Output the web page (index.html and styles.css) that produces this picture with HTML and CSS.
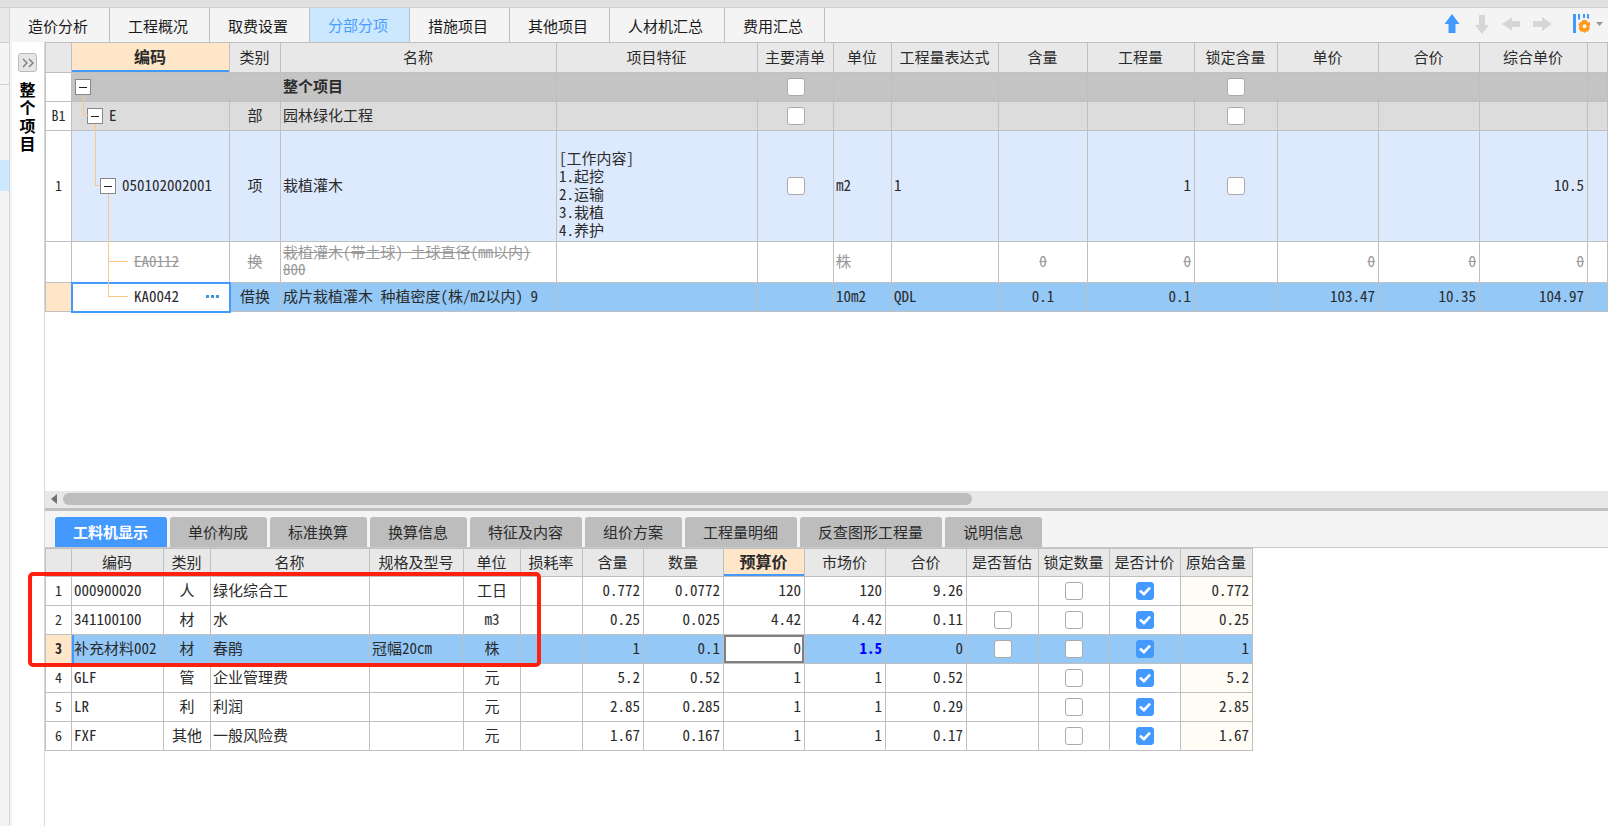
FILE: index.html
```
<!DOCTYPE html>
<html lang="zh-CN">
<head>
<meta charset="utf-8">
<title>分部分项</title>
<link rel="stylesheet" href="styles.css">
</head>
<body>
<div class="topbar"></div>
<div class="app">
  <aside class="rail">
    <div class="rail-head"></div>
    <div class="rail-tool"></div>
    <div class="rail-list"><div class="rail-active"></div></div>
  </aside>
  <div class="workspace">
    <header class="tabbar">
      <nav class="tabs">
        <button class="tab">造价分析</button>
        <button class="tab">工程概况</button>
        <button class="tab">取费设置</button>
        <button class="tab tab-on">分部分项</button>
        <button class="tab">措施项目</button>
        <button class="tab">其他项目</button>
        <button class="tab">人材机汇总</button>
        <button class="tab">费用汇总</button>
      </nav>
      <div class="tools">
        <button class="tool" aria-label="上移"><svg width="20" height="20" viewBox="0 0 20 20"><path fill="#4499ff" d="M10 0l7.500 10H13.500v9h-7v-9H2.500z"/></svg></button>
        <button class="tool" aria-label="下移"><svg width="20" height="20" viewBox="0 0 20 20"><path fill="#d6d6d6" d="M10 20L3 11h4V1h6v10h4z"/></svg></button>
        <button class="tool" aria-label="左移"><svg width="20" height="20" viewBox="0 0 20 20"><path fill="#d6d6d6" d="M0 10l10-7v4h8v6h-8v4z"/></svg></button>
        <button class="tool" aria-label="右移"><svg width="20" height="20" viewBox="0 0 20 20"><path fill="#d6d6d6" d="M20 10L10 3v4H1v6h9v4z"/></svg></button>
        <button class="tool tool-set" aria-label="列设置"><svg width="32" height="20" viewBox="0 0 32 20"><path fill="#4499ff" d="M1 0h3v19H1zM6 0h2v6L6 5zM11 0h2v4h-2zM15 0h2v5l-2-1z"/><path fill="#ff9a1f" fill-rule="evenodd" d="M10.500 6h4l1 2 2.500.5v3L17 12.500l1 1.500-2 3.500h-2L12.500 19l-2-1.500h-2l-2-3.500 1-1.500-1-1.500 1.500-3 2-.2zM12.500 10.200a2 2 0 1 0 .01 4 2 2 0 1 0-.01-4z"/><path fill="#999" d="M24 8h7l-3.500 4z"/></svg></button>
      </div>
    </header>
    <div class="body">
      <aside class="side">
        <button class="expand" aria-label="展开"><svg width="12" height="10" viewBox="0 0 12 10"><path d="M1 1l4 4-4 4M7 1l4 4-4 4" fill="none" stroke="#777" stroke-width="1.300"/></svg></button>
        <div class="side-title">整个项目</div>
      </aside>
      <main class="main">
        <section class="upper">
          <table class="grid grid-upper">
            <colgroup><col class="w26"><col class="w158"><col class="w51"><col class="w276"><col class="w201"><col class="w76"><col class="w58"><col class="w107"><col class="w89"><col class="w107"><col class="w83"><col class="w101"><col class="w101"><col class="w108"><col></colgroup>
            <thead><tr><th></th><th class="picked">编码</th><th>类别</th><th>名称</th><th>项目特征</th><th>主要清单</th><th>单位</th><th>工程量表达式</th><th>含量</th><th>工程量</th><th>锁定含量</th><th>单价</th><th>合价</th><th>综合单价</th><th></th></tr></thead>
            <tbody>
              <tr class="r-total"><td class="no"></td><td class="tree"><div class="node l0"><button class="toggle" aria-label="折叠"></button></div><i class="down l0"></i></td><td></td><td class="b">整个项目</td><td></td><td class="k"><input type="checkbox" aria-label="主要清单"></td><td></td><td></td><td></td><td></td><td class="k"><input type="checkbox" aria-label="锁定含量"></td><td></td><td></td><td></td><td></td></tr>
              <tr class="r-part"><td class="no">B1</td><td class="tree"><i class="up l0"></i><i class="down l1"></i><div class="node l1"><button class="toggle" aria-label="折叠"></button><span class="label">E</span></div></td><td class="c">部</td><td>园林绿化工程</td><td></td><td class="k"><input type="checkbox" aria-label="主要清单"></td><td></td><td></td><td></td><td></td><td class="k"><input type="checkbox" aria-label="锁定含量"></td><td></td><td></td><td></td><td></td></tr>
              <tr class="r-item"><td class="no">1</td><td class="tree"><i class="up l1"></i><i class="down l2"></i><div class="node l2"><button class="toggle" aria-label="折叠"></button><span class="label">050102002001</span></div></td><td class="c">项</td><td>栽植灌木</td><td class="feature"><br>[工作内容]<br>1.起挖<br>2.运输<br>3.栽植<br>4.养护</td><td class="k"><input type="checkbox" aria-label="主要清单"></td><td>m2</td><td>1</td><td></td><td class="r">1</td><td class="k"><input type="checkbox" aria-label="锁定含量"></td><td></td><td></td><td class="r">10.5</td><td></td></tr>
              <tr class="r-old"><td class="no"></td><td class="tree"><i class="up stub l2"></i><i class="down full l2"></i><div class="node l3"><s class="label">EA0112</s></div></td><td class="c"><s>换</s></td><td><s>栽植灌木(带土球) 土球直径(mm以内) 800</s></td><td></td><td></td><td><s>株</s></td><td></td><td class="c"><s>0</s></td><td class="r"><s>0</s></td><td></td><td class="r"><s>0</s></td><td class="r"><s>0</s></td><td class="r"><s>0</s></td><td></td></tr>
              <tr class="r-sel"><td class="no picked-no"></td><td class="tree editing"><i class="up stub l2"></i><div class="node l3"><input class="code label" type="text" value="KA0042" aria-label="编码"><button class="more" aria-label="更多"><svg width="14" height="4" viewBox="0 0 14 4"><path fill="#3d95e6" d="M0 0h3v3H0zM5 0h3v3H5zM10 0h3v3h-3z"/></svg></button></div></td><td class="c">借换</td><td>成片栽植灌木 种植密度(株/m2以内) 9</td><td></td><td></td><td>10m2</td><td>QDL</td><td class="c">0.1</td><td class="r">0.1</td><td></td><td class="r">103.47</td><td class="r">10.35</td><td class="r">104.97</td><td></td></tr>
            </tbody>
          </table>
        </section>
        <div class="scroll"><svg width="6" height="10" viewBox="0 0 6 10"><path fill="#707070" d="M6 0v10L0 5z"/></svg><div class="thumb"></div></div>
        <section class="lower">
          <nav class="subtabs">
            <button class="subtab subtab-on">工料机显示</button>
            <button class="subtab">单价构成</button>
            <button class="subtab">标准换算</button>
            <button class="subtab">换算信息</button>
            <button class="subtab">特征及内容</button>
            <button class="subtab">组价方案</button>
            <button class="subtab">工程量明细</button>
            <button class="subtab">反查图形工程量</button>
            <button class="subtab">说明信息</button>
          </nav>
          <div class="detail">
            <table class="grid grid-lower">
              <colgroup><col class="w26"><col class="w92"><col class="w47"><col class="w159"><col class="w94"><col class="w57"><col class="w62"><col class="w61"><col class="w80"><col class="w81"><col class="w81"><col class="w81"><col class="w72"><col class="w71"><col class="w71"><col class="w72"></colgroup>
              <thead><tr><th></th><th>编码</th><th>类别</th><th>名称</th><th>规格及型号</th><th>单位</th><th>损耗率</th><th>含量</th><th>数量</th><th class="picked">预算价</th><th>市场价</th><th>合价</th><th>是否暂估</th><th>锁定数量</th><th>是否计价</th><th>原始含量</th></tr></thead>
              <tbody>
                <tr><td class="no">1</td><td>000900020</td><td class="c">人</td><td>绿化综合工</td><td></td><td class="c">工日</td><td></td><td class="r">0.772</td><td class="r">0.0772</td><td class="r">120</td><td class="r">120</td><td class="r">9.26</td><td></td><td class="k"><input type="checkbox" aria-label="锁定数量"></td><td class="k"><input type="checkbox" checked aria-label="是否计价"></td><td class="r orig">0.772</td></tr>
                <tr><td class="no">2</td><td>341100100</td><td class="c">材</td><td>水</td><td></td><td class="c">m3</td><td></td><td class="r">0.25</td><td class="r">0.025</td><td class="r">4.42</td><td class="r">4.42</td><td class="r">0.11</td><td class="k"><input type="checkbox" aria-label="是否暂估"></td><td class="k"><input type="checkbox" aria-label="锁定数量"></td><td class="k"><input type="checkbox" checked aria-label="是否计价"></td><td class="r orig">0.25</td></tr>
                <tr class="r-sel"><td class="no picked-no b">3</td><td class="cursor">补充材料002</td><td class="c">材</td><td>春鹃</td><td>冠幅20cm</td><td class="c">株</td><td></td><td class="r">1</td><td class="r">0.1</td><td class="edit"><input class="price" type="text" value="0" aria-label="预算价"></td><td class="r changed">1.5</td><td class="r">0</td><td class="k"><input type="checkbox" aria-label="是否暂估"></td><td class="k"><input type="checkbox" aria-label="锁定数量"></td><td class="k"><input type="checkbox" checked aria-label="是否计价"></td><td class="r">1</td></tr>
                <tr><td class="no">4</td><td>GLF</td><td class="c">管</td><td>企业管理费</td><td></td><td class="c">元</td><td></td><td class="r">5.2</td><td class="r">0.52</td><td class="r">1</td><td class="r">1</td><td class="r">0.52</td><td></td><td class="k"><input type="checkbox" aria-label="锁定数量"></td><td class="k"><input type="checkbox" checked aria-label="是否计价"></td><td class="r orig">5.2</td></tr>
                <tr><td class="no">5</td><td>LR</td><td class="c">利</td><td>利润</td><td></td><td class="c">元</td><td></td><td class="r">2.85</td><td class="r">0.285</td><td class="r">1</td><td class="r">1</td><td class="r">0.29</td><td></td><td class="k"><input type="checkbox" aria-label="锁定数量"></td><td class="k"><input type="checkbox" checked aria-label="是否计价"></td><td class="r orig">2.85</td></tr>
                <tr><td class="no">6</td><td>FXF</td><td class="c">其他</td><td>一般风险费</td><td></td><td class="c">元</td><td></td><td class="r">1.67</td><td class="r">0.167</td><td class="r">1</td><td class="r">1</td><td class="r">0.17</td><td></td><td class="k"><input type="checkbox" aria-label="锁定数量"></td><td class="k"><input type="checkbox" checked aria-label="是否计价"></td><td class="r orig">1.67</td></tr>
              </tbody>
            </table>
            <div class="marker"></div>
          </div>
        </section>
      </main>
    </div>
  </div>
</div>
</body>
</html>
```
FILE: styles.css
```
* { box-sizing: border-box; }

body {
  margin: 0;
  height: 100vh;
  display: flex;
  flex-direction: column;
  overflow: hidden;
  background: #fff;
  color: #2b2b2b;
  font: 15px/17px "Noto Sans Mono CJK SC", "Noto Sans CJK SC", "Liberation Mono", sans-serif;
}

button, input { font: inherit; color: inherit; margin: 0; padding: 0; }
button { border: 0; background: none; }

.topbar { flex: none; height: 8px; background: #e0e0e0; border-bottom: 1px solid #cfcfcf; }
.app { flex: 1; display: flex; min-height: 0; }

/* left rail */
.rail { flex: none; width: 10px; background: #f4f4f4; border-right: 1px solid #d6d6d6; display: flex; flex-direction: column; }
.rail-head { height: 35px; background: #e8e8e8; border-bottom: 1px solid #cfcfcf; }
.rail-tool { height: 42px; border-bottom: 1px solid #d0d0d0; }
.rail-list { padding-top: 75px; }
.rail-active { height: 31px; background: #cce8ff; }

.workspace { flex: 1; min-width: 0; display: flex; flex-direction: column; }

/* page tabs */
.tabbar { flex: none; height: 34px; display: flex; justify-content: space-between; background: #f4f4f4; }
.tabs { display: flex; }
.tab {
  padding: 0 21px 0 18px;
  border-right: 1px solid #c0c0c0;
  font-family: "Noto Sans CJK SC", sans-serif;
  color: #1a1a1a;
}
.tab-on { background: #cce8ff; color: #4a9dff; padding-bottom: 2px; }
.tools { display: flex; gap: 10px; align-items: center; padding: 0 4px 2px 0; }
.tool { display: flex; }
.tool-set { margin-left: 10px; }

.body { flex: 1; display: flex; min-height: 0; }
.side {
  flex: none; width: 35px; border-right: 1px solid #d9d9d9; border-left: 2px solid #f4f4f4;
  display: flex; flex-direction: column; align-items: center; padding: 11px 1px 0 0; gap: 8px;
}
.expand {
  width: 19px; height: 19px; border: 1px solid #bbb; border-radius: 3px; background: #e6e6e6;
  display: flex; align-items: center; justify-content: center;
}
.side-title { width: 16px; font-size: 16px; line-height: 18px; font-weight: bold; color: #000; word-break: break-all; }

.main { flex: 1; min-width: 0; display: flex; flex-direction: column; }
.upper { flex: 1; min-height: 0; overflow: hidden; }

/* data grids */
.grid { table-layout: fixed; border-collapse: collapse; }
.grid-upper { width: 100%; }
.grid-lower { width: 1207px; }
.grid th, .grid td { border: 1px solid #c0c0c0; height: 29px; padding: 0 2px 4px; overflow: hidden; }
.grid th { background: #e8e8e8; font-weight: normal; padding: 0 1px 2px 0; white-space: nowrap; }
.grid-upper th { height: 30px; }
.grid-lower th { height: 28px; }
.grid th.picked { background: #ffe6c8; font-weight: bold; font-size: 16px; box-shadow: inset 0 -2px #4499ff; }
.grid td.no { background: #fff; text-align: center; padding: 0 0 2px; font-size: 14px; }
.grid td.picked-no { background: #ffe6c8; }
.grid td.c { text-align: center; }
.grid td.k { text-align: center; padding: 0; line-height: 1; }
.grid-upper td.k { padding-bottom: 1px; }
.grid td.r { text-align: right; padding-right: 3px; }
.grid td.b { font-weight: bold; }
.grid td.orig { background: #fffbf5; }
.grid td.changed { color: #00f; font-weight: bold; }

.w26 { width: 26px; } .w47 { width: 47px; } .w51 { width: 51px; } .w57 { width: 57px; }
.w58 { width: 58px; } .w61 { width: 61px; } .w62 { width: 62px; } .w71 { width: 71px; }
.w72 { width: 72px; } .w76 { width: 76px; } .w80 { width: 80px; } .w81 { width: 81px; }
.w83 { width: 83px; } .w89 { width: 89px; } .w92 { width: 92px; } .w94 { width: 94px; }
.w101 { width: 101px; } .w107 { width: 107px; } .w108 { width: 108px; } .w158 { width: 158px; }
.w159 { width: 159px; } .w201 { width: 201px; } .w276 { width: 276px; }

.r-total { background: #c4c4c4; }
.r-part { background: #dcdcdc; }
.r-item { background: #dde9fd; }
.r-sel { background: #93c8f7; }
.grid .r-item td { height: 111px; }
.grid .r-old td { height: 41px; }
.grid td.feature { line-height: 18px; padding-bottom: 2px; }
.r-old { color: #999; }

input[type="checkbox"] {
  appearance: none; display: inline-block; vertical-align: middle; position: relative;
  width: 18px; height: 18px; border: 1px solid #aaa; border-radius: 3px; background: #fff;
}
input[type="checkbox"]:checked { background: #4499ff; border-color: #4499ff; }
input[type="checkbox"]:checked::after {
  content: ""; position: absolute; inset: 3px 2px;
  background: #fff;
  clip-path: polygon(0 50%, 16% 32%, 40% 58%, 84% 4%, 100% 20%, 42% 96%);
}

/* tree column */
.grid td.tree { position: relative; padding: 0; overflow: visible; }
.l0 { --x: 3px; } .l1 { --x: 15px; } .l2 { --x: 28px; } .l3 { --x: 62px; }
.node { display: flex; align-items: center; gap: 6px; padding-left: var(--x); }
.label { padding-bottom: 4px; }
.toggle {
  flex: none; width: 16px; height: 16px; border: 1px solid #888; background: #fff;
  display: flex; align-items: center; justify-content: center;
}
.toggle::before { content: ""; width: 8px; height: 1px; background: #222; }
.up, .down { position: absolute; left: calc(var(--x) + 8px); border-left: 1px solid #fcc88a; }
.up { top: -1px; height: calc(50% + 1px); width: 5px; border-bottom: 1px solid #fcc88a; }
.stub { width: 20px; }
.down { top: calc(50% + 8px); bottom: 0; }
.full { top: 0; }
.grid td.editing { background: #fff; outline: 2px solid #4499ff; outline-offset: -1px; }
.code { flex: 1; min-width: 0; border: 0; background: none; outline: 0; }
.more { padding-right: 9px; display: flex; }

/* scroll bar and lower pane */
.scroll {
  flex: none; height: 20px; padding: 2px 5px 3px 6px; display: flex; align-items: center; gap: 6px;
  background: #e8e8e8; border-bottom: 3px solid #c0c0c0;
}
.scroll svg { flex: none; }
.thumb { width: 58.6%; height: 12px; border-radius: 6px; background: #bdbdbd; }
.lower { flex: none; height: 315px; }
.subtabs { display: flex; gap: 3px; height: 37px; padding: 6px 0 0 10px; background: #f4f4f4; border-bottom: 1px solid #c8c8c8; }
.subtab {
  height: 30px; padding: 0 19px 1px 18px; background: #bdbdbd; border-radius: 3px 3px 0 0;
  font-family: "Noto Sans CJK SC", sans-serif;
}
.subtab-on { background: #4499ff; color: #fff; font-weight: bold; }
.detail { position: relative; }
.grid td.cursor { box-shadow: inset 2px 0 #4499ff; }
.grid td.edit { padding: 0; }
.price { display: block; width: 100%; height: 28px; border: 2px solid #808080; background: #fff; text-align: right; padding: 0 1px 3px 0; outline: 0; }
.marker {
  position: absolute; left: -17px; top: 24px; width: 513px; height: 95px;
  border: 4px solid #ff2010; border-radius: 5px; pointer-events: none;
}
```
